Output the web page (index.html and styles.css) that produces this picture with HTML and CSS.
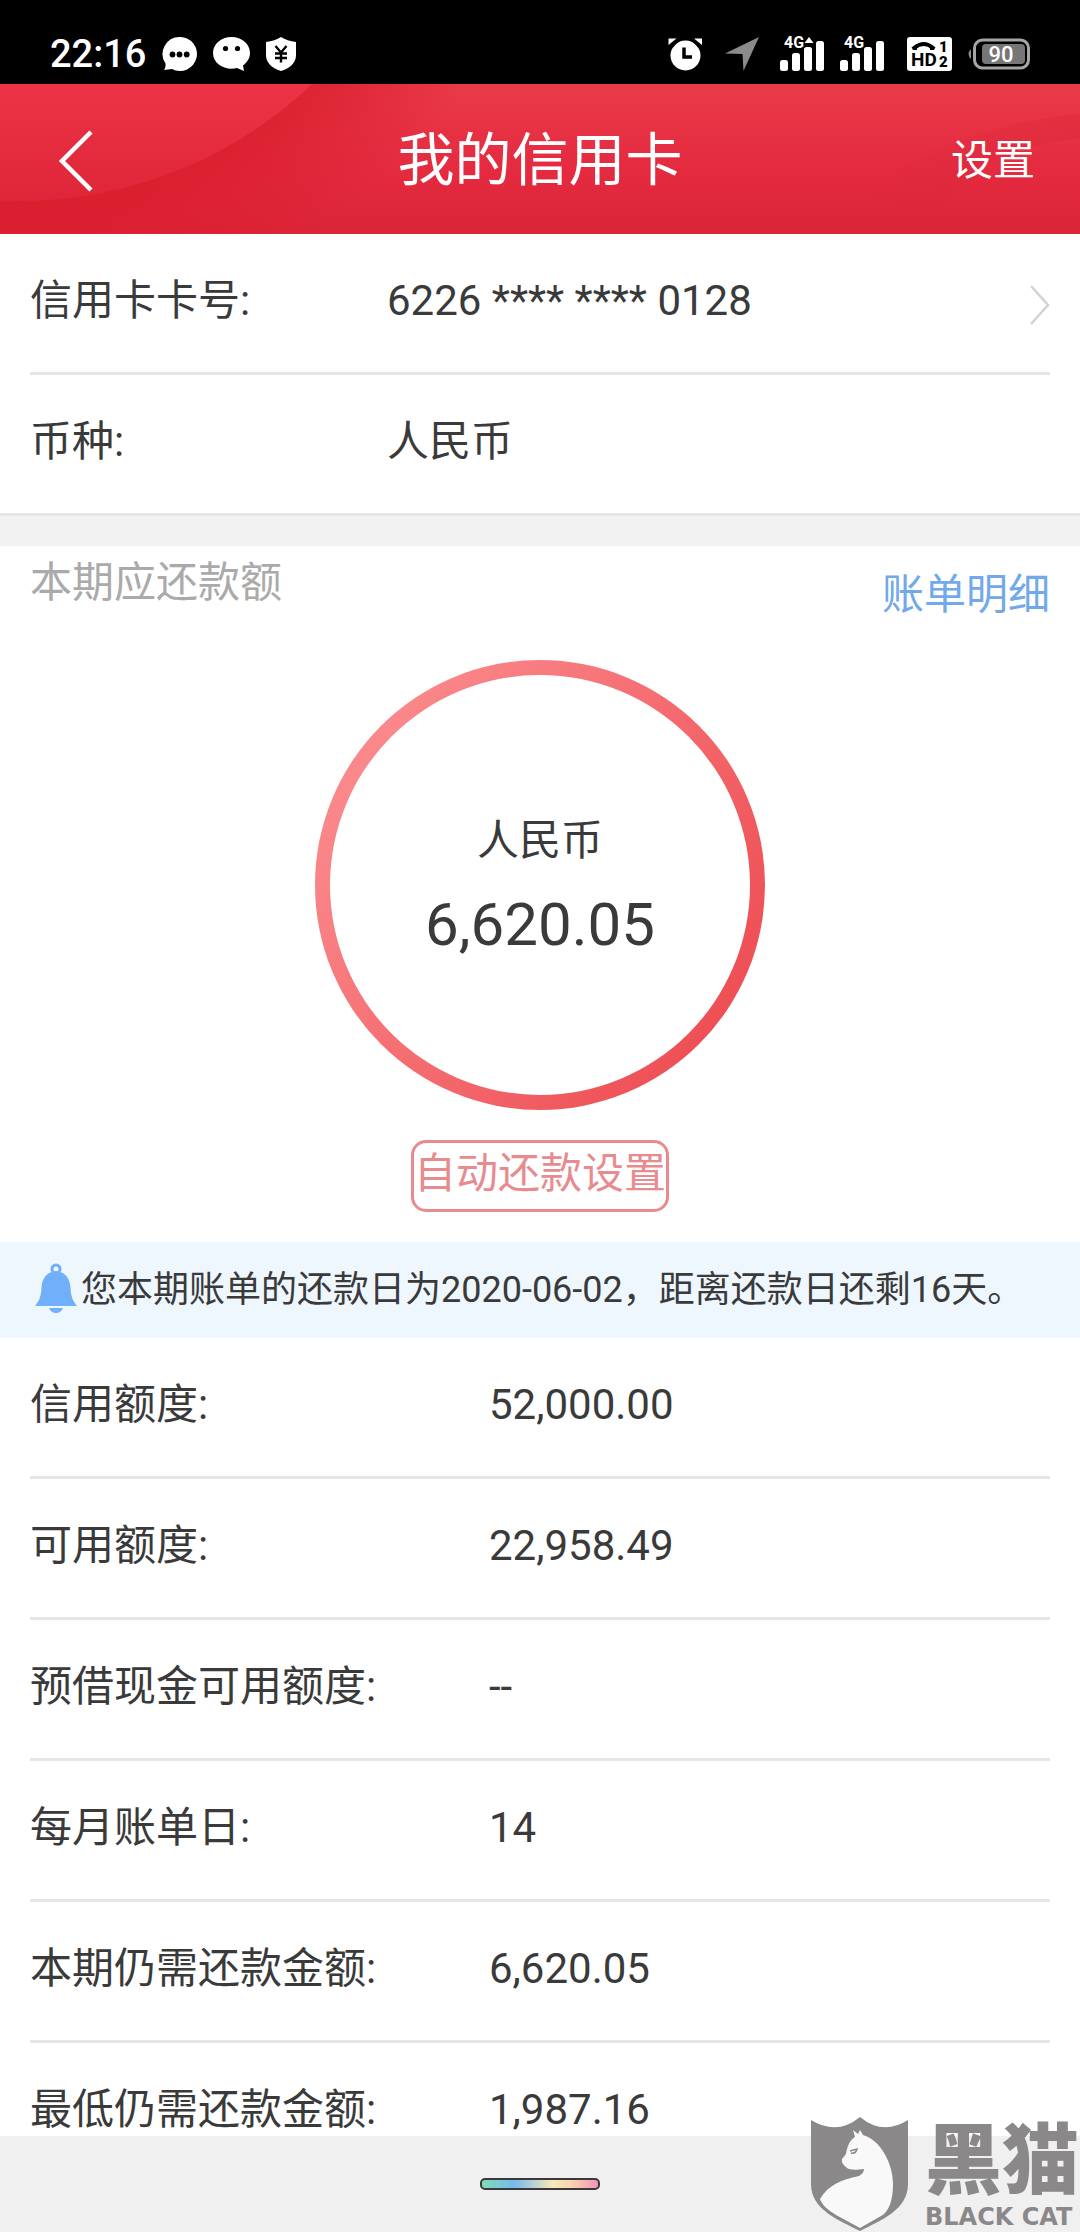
FILE: index.html
```html
<!DOCTYPE html>
<html lang="zh-CN">
<head>
<meta charset="utf-8">
<meta name="viewport" content="width=device-width, initial-scale=1">
<title>我的信用卡</title>
<link rel="stylesheet" href="styles.css">
</head>
<body>
<div class="app">
  <div class="status">
    <span class="clock">22:16</span>
    <svg width="35" height="34" viewBox="0 0 35 34"><path fill="#fff" d="M17.500 0A17 17 0 1 1 10 32L2 33Q4 30 3.500 26.500A17 17 0 0 1 17.500 0Z"/><g fill="#000"><circle cx="10.500" cy="17.500" r="2.900"/><circle cx="17.500" cy="17.500" r="2.900"/><circle cx="24.700" cy="17.500" r="2.900"/></g></svg>
    <svg width="37" height="34" viewBox="0 0 37 34"><path fill="#fff" d="M18.500 0C29 0 37 7 37 16C37 21 34.500 25 30 28.500L31 34L24 31C13 34 0 27.500 0 16C0 7 8 0 18.500 0Z"/><circle cx="12.500" cy="11.500" r="2.600"/><circle cx="24.500" cy="11.500" r="2.600"/></svg>
    <svg width="30" height="34" viewBox="0 0 30 34"><path fill="#fff" d="M15 0Q21 4 30 5V18Q30 29 15 34Q0 29 0 18V5Q9 4 15 0Z"/><path d="M9.500 9L15 15.500L20.500 9M15 15V25.500M9 16.500H21M9 21H21" fill="none" stroke="#000" stroke-width="2.400"/></svg>
    <span class="spacer"></span>
    <svg width="41" height="34" viewBox="0 0 41 34"><g fill="#fff"><circle cx="17.500" cy="18.500" r="15"/><path d="M.500 8V1.500H8.500ZM34 8V1.500H26Z"/></g><path d="M4 9.500Q8 3.500 14 1.500M31 9.500Q27 3.500 21 1.500" fill="none" stroke="#000" stroke-width="3"/><path d="M16 10.500V20H24" fill="none" stroke="#000" stroke-width="3.500"/></svg>
    <svg width="39" height="34" viewBox="0 0 39 34"><path fill="#8b8b8b" d="M34 0L18.500 34L17.500 17L0 16.500Z"/></svg>
    <svg width="44" height="48" viewBox="0 -6 44 48"><g fill="#fff"><rect y="24" width="8" height="11" rx="2.500"/><rect x="12" y="17" width="8" height="18" rx="2.500"/><rect x="24" y="11" width="8" height="24" rx="2.500"/><rect x="36" y="5" width="8" height="30" rx="2.500"/><path d="M24.500 7L29 1L33.500 7Z"/><text class="net" x="4" y="12">4G</text></g></svg>
    <svg width="51" height="48" viewBox="0 -6 51 48"><g fill="#fff"><rect y="24" width="8" height="11" rx="2.500"/><rect x="12" y="17" width="8" height="18" rx="2.500"/><rect x="24" y="11" width="8" height="24" rx="2.500"/><rect x="36" y="5" width="8" height="30" rx="2.500"/><text class="net" x="4" y="12">4G</text></g></svg>
    <svg width="45" height="34" viewBox="0 0 45 34"><rect width="45" height="34" rx="3" fill="#fff"/><path d="M7 11Q17 3 26 11" fill="none" stroke="#000" stroke-width="4"/><path d="M4.500 10L10 9V13H6ZM28.500 10L23 9V13H27Z"/><text class="hd" x="4" y="29">HD</text><text class="sim" x="32" y="15">1</text><text class="sim" x="32" y="30">2</text></svg>
    <svg width="62" height="32" viewBox="0 0 62 32"><path d="M3 11Q-2 16 3 21Z" fill="#8b8b8b"/><rect x="6.500" y="2" width="54" height="28" rx="8" fill="none" stroke="#a5a5a5" stroke-width="3"/><rect x="14" y="6" width="43" height="20" rx="4" fill="#767676"/><text class="charge" x="33" y="24">90</text></svg>
  </div>

  <header class="header">
    <svg class="header-art" viewBox="0 0 1080 150" preserveAspectRatio="xMinYMin slice" aria-hidden="true">
      <defs>
        <linearGradient id="base" x1="0" y1="0" x2="0" y2="1"><stop offset="0" stop-color="#ea3a48"/><stop offset=".55" stop-color="#e42b40"/><stop offset="1" stop-color="#dc2438"/></linearGradient>
        <linearGradient id="disc" x1="0" y1="0" x2="0" y2="1"><stop offset=".86" stop-color="#ec3446"/><stop offset="1" stop-color="#df2639"/></linearGradient>
        <radialGradient id="shade" gradientUnits="userSpaceOnUse" cx="20" cy="-306" r="540"><stop offset=".78" stop-color="#d71b29"/><stop offset="1" stop-color="#d71b29" stop-opacity="0"/></radialGradient>
        <linearGradient id="corner" x1="0" y1="0" x2="1" y2="0"><stop offset="0" stop-color="#d62233" stop-opacity="0"/><stop offset="1" stop-color="#d62233" stop-opacity=".3"/></linearGradient>
      </defs>
      <rect width="1080" height="150" fill="url(#base)"/>
      <circle cx="20" cy="-306" r="540" fill="url(#shade)" opacity=".7"/>
      <circle cx="20" cy="-306" r="423" fill="url(#disc)"/>
      <path d="M860 110Q960 40 1080 30V54Q960 70 938 130Q900 140 860 110Z" fill="url(#corner)"/>
    </svg>
    <button class="back" aria-label="返回"><svg width="36" height="62" viewBox="0 0 36 62"><path d="M33 2L4 31L33 60" fill="none" stroke="#fff" stroke-width="4.500"/></svg></button>
    <h1 class="title">我的信用卡</h1>
    <button class="settings">设置</button>
  </header>

  <main class="content">
    <dl class="rows card">
      <div class="row"><dt>信用卡卡号:</dt><dd>6226 **** **** 0128</dd>
        <a class="more" href="#card" aria-label="切换信用卡"><svg width="20" height="40" viewBox="0 0 20 40"><path d="M1 1L18 20L1 39" fill="none" stroke="#d2d2d2" stroke-width="2.500"/></svg></a></div>
      <div class="row"><dt>币种:</dt><dd>人民币</dd></div>
    </dl>

    <section class="bill">
      <div class="bill-head">
        <h2 class="bill-title">本期应还款额</h2>
        <a class="detail" href="#detail">账单明细</a>
      </div>
      <div class="ring">
        <span class="currency">人民币</span>
        <span class="amount">6,620.05</span>
      </div>
      <button class="auto">自动还款设置</button>
    </section>

    <p class="notice">
      <svg width="42" height="54" viewBox="0 0 42 54"><circle cx="21" cy="6" r="4" fill="none" stroke="#72affb" stroke-width="3"/><path fill="#72affb" d="M21 8C31 9 35 16 35.500 25C36 34 38 38 42 43H0C4 38 6 34 6.500 25C7 16 11 9 21 8ZM14 45H28Q26 50 21 50Q16 50 14 45Z"/></svg>
      <span>您本期账单的还款日为2020-06-02，距离还款日还剩16天。</span>
    </p>

    <dl class="rows limits">
      <div class="row"><dt>信用额度:</dt><dd>52,000.00</dd></div>
      <div class="row"><dt>可用额度:</dt><dd>22,958.49</dd></div>
      <div class="row"><dt>预借现金可用额度:</dt><dd>--</dd></div>
      <div class="row"><dt>每月账单日:</dt><dd>14</dd></div>
      <div class="row"><dt>本期仍需还款金额:</dt><dd>6,620.05</dd></div>
      <div class="row"><dt>最低仍需还款金额:</dt><dd>1,987.16</dd></div>
    </dl>
  </main>

  <footer class="nav"><span class="pill"></span></footer>

  <div class="brand">
    <svg width="98" height="116" viewBox="0 0 98 116" aria-hidden="true">
      <path fill="#8a8888" d="M0 4Q26 20 49 1Q72 20 97 4V68C97 94 70 104 49 115C28 104 0 94 0 68Z"/>
      <path fill="#f9f9f9" d="M42 14L47 18L49 14L52 19C70 24 82 48 82 68C82 84 78 96 70 100L49 112L25 99C17 94 11 89 9 83C17 69 30 64 48 60C51 58 53 56 53 53C47 54 42 54 38 53C34 51 30 47 31 43L35 38C36 30 39 24 44 21Z"/>
      <path d="M39 35L46 33Q45 38 40 37" fill="none" stroke="#8a8888" stroke-width="1.500"/>
    </svg>
    <div class="brand-text"><span class="brand-cn">黑猫</span><span class="brand-en">BLACK CAT</span></div>
  </div>
</div>
</body>
</html>
```
FILE: styles.css
```css
* {
  box-sizing: border-box;
  margin: 0;
  padding: 0;
}

body {
  background: #fff;
  color: #3a3a3a;
  font: 400 42px/60px Roboto, "Noto Sans CJK SC", sans-serif;
}

svg {
  display: block;
  flex: none;
}

button {
  border: 0;
  background: none;
  color: inherit;
  font: inherit;
}

a {
  color: inherit;
  text-decoration: none;
}

.app {
  position: relative;
  display: flex;
  flex-direction: column;
  height: 100vh;
  overflow: hidden;
}

/* status bar */
.status {
  display: flex;
  flex: none;
  align-items: center;
  gap: 16px;
  height: 84px;
  padding: 24px 50px 0;
  background: #000;
  color: #fff;
}

.clock {
  font-size: 38px;
  font-weight: 500;
  line-height: 40px;
}

.spacer {
  flex: 1;
}

.net {
  font-size: 16px;
  font-weight: 700;
}

.hd {
  font-size: 19px;
  font-weight: 700;
}

.sim {
  font-size: 15px;
  font-weight: 900;
}

.charge {
  fill: #fff;
  font-size: 22px;
  font-weight: 500;
  text-anchor: middle;
}

/* header */
.header {
  position: relative;
  display: grid;
  flex: none;
  grid-template-columns: 1fr auto 1fr;
  align-items: center;
  height: 150px;
  padding: 4px 45px 0;
  color: #fff;
}

.header-art {
  position: absolute;
  inset: 0;
  z-index: -1;
  width: 100%;
  height: 100%;
}

.back {
  justify-self: start;
  padding-left: 13px;
}

.title {
  font-size: 57px;
  font-weight: 400;
}

.settings {
  justify-self: end;
}

/* content */
.content {
  flex: 1;
  min-height: 0;
  overflow: auto;
  scrollbar-width: none;
}

.rows {
  padding: 0 30px;
}

.row {
  display: grid;
  grid-template-columns: 45% 1fr auto;
  height: 141px;
  padding-top: 37px;
  border-bottom: 3px solid #e6e6e6;
}

.card {
  padding: 0;
  border-bottom: 30px solid #f2f2f2;
}

.card .row {
  grid-template-columns: 35% 1fr auto;
  margin: 0 30px;
}

.card .row:last-child {
  margin: 0;
  padding-left: 30px;
  padding-right: 30px;
}

.more {
  padding-top: 14px;
}

.bill {
  display: flex;
  flex-direction: column;
  align-items: center;
  padding: 7px 30px 30px;
}

.bill-head {
  display: flex;
  justify-content: space-between;
  width: 100%;
  height: 107px;
}

.bill-title {
  color: #aaa;
  font-size: 42px;
  font-weight: 400;
}

.detail {
  padding-top: 12px;
  color: #72a9ea;
}

.ring {
  display: flex;
  flex-direction: column;
  align-items: center;
  gap: 19px;
  width: 450px;
  height: 450px;
  padding-top: 136px;
  border: 15px solid transparent;
  border-radius: 50%;
  background:
    linear-gradient(#fff, #fff) padding-box,
    linear-gradient(125deg, #fb8c8e 10%, #ed4c52 90%) border-box;
}

.amount {
  font-size: 60px;
  line-height: 70px;
}

.auto {
  height: 72px;
  margin-top: 30px;
  padding: 0 0 4px;
  border: 3px solid #e88b8f;
  border-radius: 15px;
  color: #e88b8f;
}

.notice {
  display: flex;
  align-items: center;
  gap: 4px;
  height: 96px;
  padding: 0 35px;
  background: #eef6fe;
  font-size: 36px;
}

/* bottom bar */
.nav {
  display: flex;
  flex: none;
  align-items: center;
  justify-content: center;
  height: 96px;
  background: #f0f0f0;
}

.pill {
  width: 120px;
  height: 12px;
  border: 2px solid #3a3a3a;
  border-radius: 5px;
  background: linear-gradient(90deg, #7edcb4, #78b9ee 28%, #f5e8bc 60%, #f8d9b0 75%, #f394b8);
}

/* brand mark over the page corner */
.brand {
  position: absolute;
  right: 0;
  bottom: 0;
  display: flex;
  gap: 16px;
  color: #8a8888;
}

.brand-text {
  display: flex;
  flex-direction: column;
  width: 155px;
  padding-top: 2px;
}

.brand-cn {
  font-size: 77px;
  font-weight: 900;
  line-height: 88px;
}

.brand-en {
  font: 700 24px/22px "DejaVu Sans", sans-serif;
  white-space: nowrap;
}
```
